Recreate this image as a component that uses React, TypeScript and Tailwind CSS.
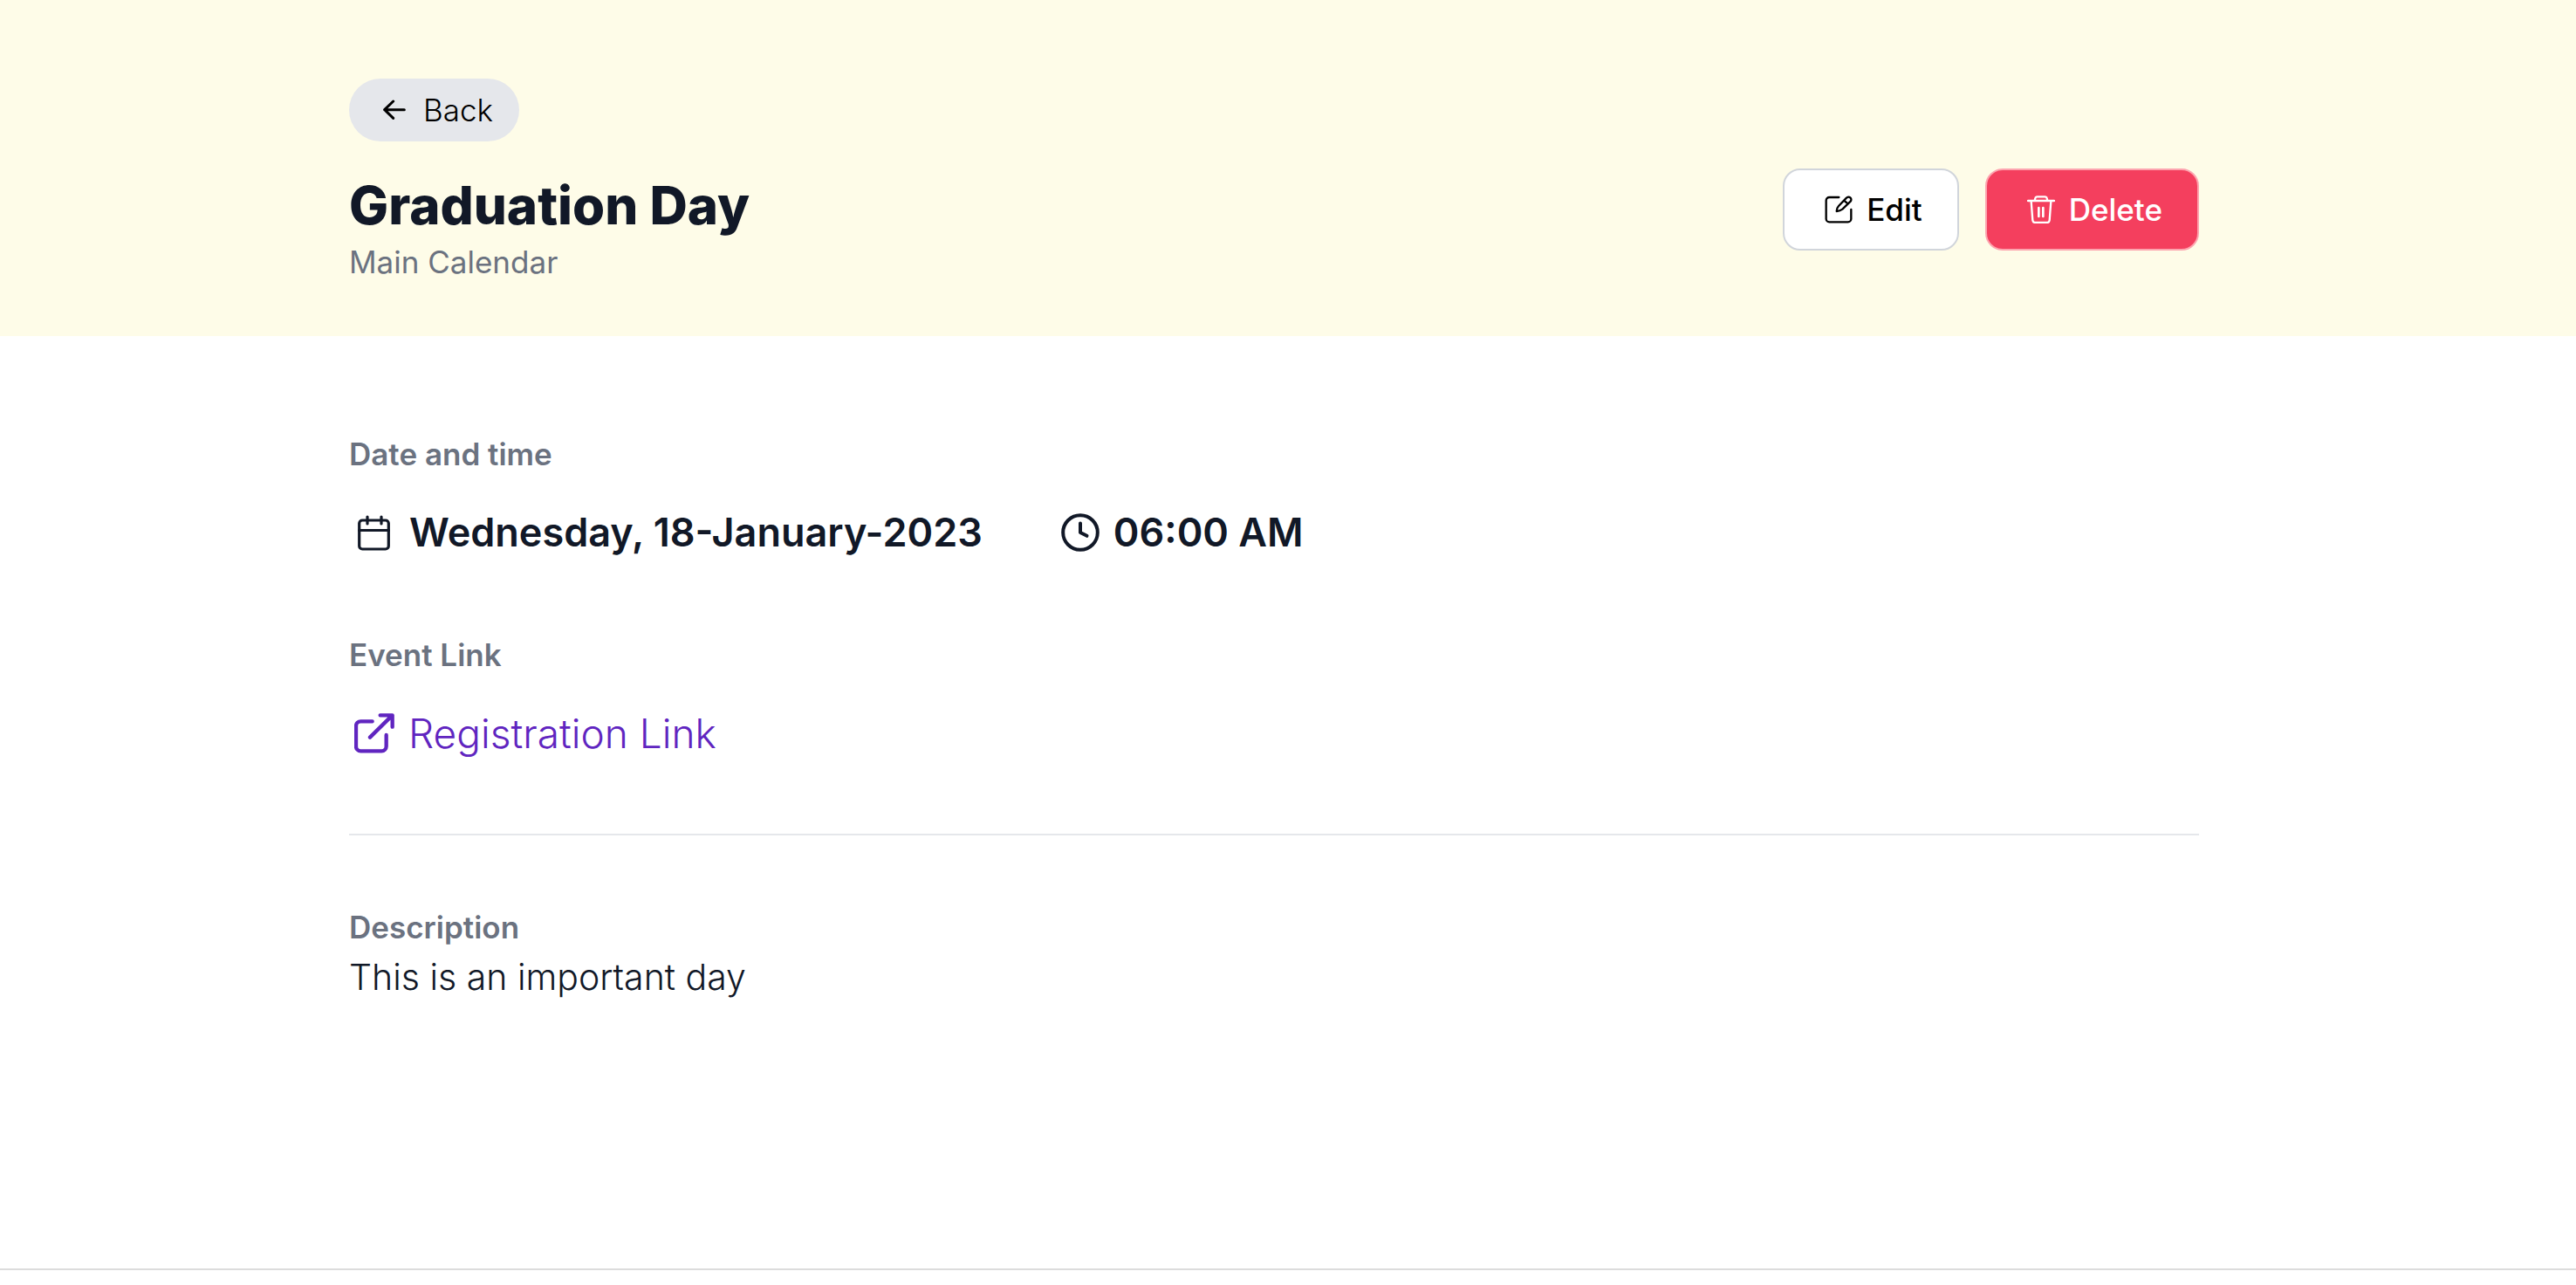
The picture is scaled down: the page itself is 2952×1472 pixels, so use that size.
import React from "react";

type IconProps = { className?: string };

function ArrowLeftIcon({ className }: IconProps) {
  return (
    <svg viewBox="0 0 78 78" className={className} fill="none" stroke="currentColor" strokeWidth="9" strokeLinecap="round" strokeLinejoin="round" aria-hidden="true">
      <path d="M73 38H5M35 9L5 38l30 29" />
    </svg>
  );
}

function EditIcon({ className }: IconProps) {
  return (
    <svg viewBox="0 0 96 96" className={className} fill="none" stroke="currentColor" strokeWidth="7" strokeLinecap="round" strokeLinejoin="round" aria-hidden="true">
      <path d="M49 6H16A11 11 0 0 0 5 17v63a11 11 0 0 0 11 11h64a11 11 0 0 0 11-11V48" />
      <path d="M48 36L75 8a9 9 0 0 1 14 12L61 47Q53 53 41 54Q41 43 48 36ZM67 17l13 12" />
    </svg>
  );
}

function TrashIcon({ className }: IconProps) {
  return (
    <svg viewBox="0 0 96 96" className={className} fill="none" stroke="currentColor" strokeWidth="7" strokeLinecap="round" strokeLinejoin="round" aria-hidden="true">
      <path d="M3 18h90M26 17l2-8q1-5 7-5h26q6 0 7 5l2 8" />
      <path d="M14 20l5 65q1 8 9 8h40q8 0 9-8l5-65" />
      <path d="M40 42v30M55 42v30" strokeWidth="8" />
    </svg>
  );
}

function CalendarIcon({ className }: IconProps) {
  return (
    <svg viewBox="0 0 37 41" className={className} fill="none" stroke="currentColor" strokeWidth="3.2" strokeLinecap="round" strokeLinejoin="round" aria-hidden="true">
      <rect x="1.7" y="6" width="33.6" height="33" rx="3.5" />
      <path d="M1.7 17.5h33.6M11 2v8M27 2v8" />
    </svg>
  );
}

function ClockIcon({ className }: IconProps) {
  return (
    <svg viewBox="0 0 44 44" className={className} fill="none" stroke="currentColor" strokeWidth="4" strokeLinecap="round" strokeLinejoin="round" aria-hidden="true">
      <circle cx="22" cy="22" r="19.8" />
      <path d="M22 11.5V22l7.5 3.8" />
    </svg>
  );
}

function ExternalLinkIcon({ className }: IconProps) {
  return (
    <svg viewBox="0 0 138 138" className={className} fill="none" stroke="currentColor" strokeWidth="13" strokeLinecap="round" strokeLinejoin="round" aria-hidden="true">
      <path d="M62 28H22A16 16 0 0 0 6 44v70a16 16 0 0 0 16 16h72a16 16 0 0 0 16-16V75" />
      <path d="M54 83L130 8M89 7h42v40" />
    </svg>
  );
}

export default function App() {
  return (
    <div className="bg-white font-['Inter',sans-serif] text-[35px] leading-[54px] text-[#111827]">
      <header className="bg-[#fefce8] pr-8">
        <div className="mx-auto max-w-[2120px] pt-[90px] pb-[62px]">
          <button type="button" className="flex h-[72px] items-center gap-5 rounded-full bg-[#e5e7eb] pr-[30px] pl-[39px] font-light text-black">
            <ArrowLeftIcon className="size-[26px]" />
            Back
          </button>
          <div className="mt-[31px] flex items-start justify-between">
            <div>
              <h1 className="text-[60px] leading-[84px] font-extrabold">Graduation Day</h1>
              <p className="leading-[46px] text-[#6b7280]">Main Calendar</p>
            </div>
            <div className="flex gap-[30px] font-medium">
              <button type="button" className="flex h-[94px] items-center gap-4 rounded-[20px] border-2 border-[#d1d5db] bg-white px-10 pl-[46px] text-black">
                <EditIcon className="size-8" />
                Edit
              </button>
              <button type="button" className="flex h-[94px] items-center gap-4 rounded-[20px] border-2 border-[#fda4af] bg-[#f43f5e] px-10 pl-[46px] text-white">
                <TrashIcon className="size-8" />
                Delete
              </button>
            </div>
          </div>
        </div>
      </header>

      <main className="border-b-2 border-[#dcdcdc] pr-8">
        <div className="mx-auto max-w-[2120px] pt-[108px] pb-[304px]">
          <section>
            <h2 className="font-semibold text-[#6b7280]">Date and time</h2>
            <div className="mt-[30px] flex items-center gap-[90px] text-[45px] leading-[66px] font-semibold">
              <div className="flex items-center gap-[22px] pl-[10px]">
                <CalendarIcon className="h-[41px] w-[37px]" />
                Wednesday, 18-January-2023
              </div>
              <div className="flex items-center gap-4">
                <ClockIcon className="size-11" />
                06:00 AM
              </div>
            </div>
          </section>

          <section className="mt-20">
            <h2 className="font-semibold text-[#6b7280]">Event Link</h2>
            <a href="#registration" className="mt-[30px] flex w-fit items-center gap-4 pl-[6px] text-[46px] leading-[66px] font-light text-[#6025c0]">
              <ExternalLinkIcon className="size-[46px]" />
              Registration Link
            </a>
          </section>

          <hr className="mt-[82px] border-t-2 border-[#e5e7eb]" />

          <section className="mt-[78px]">
            <h2 className="font-semibold text-[#6b7280]">Description</h2>
            <p className="text-[41px] leading-[60px] font-light">This is an important day</p>
          </section>
        </div>
      </main>
    </div>
  );
}
